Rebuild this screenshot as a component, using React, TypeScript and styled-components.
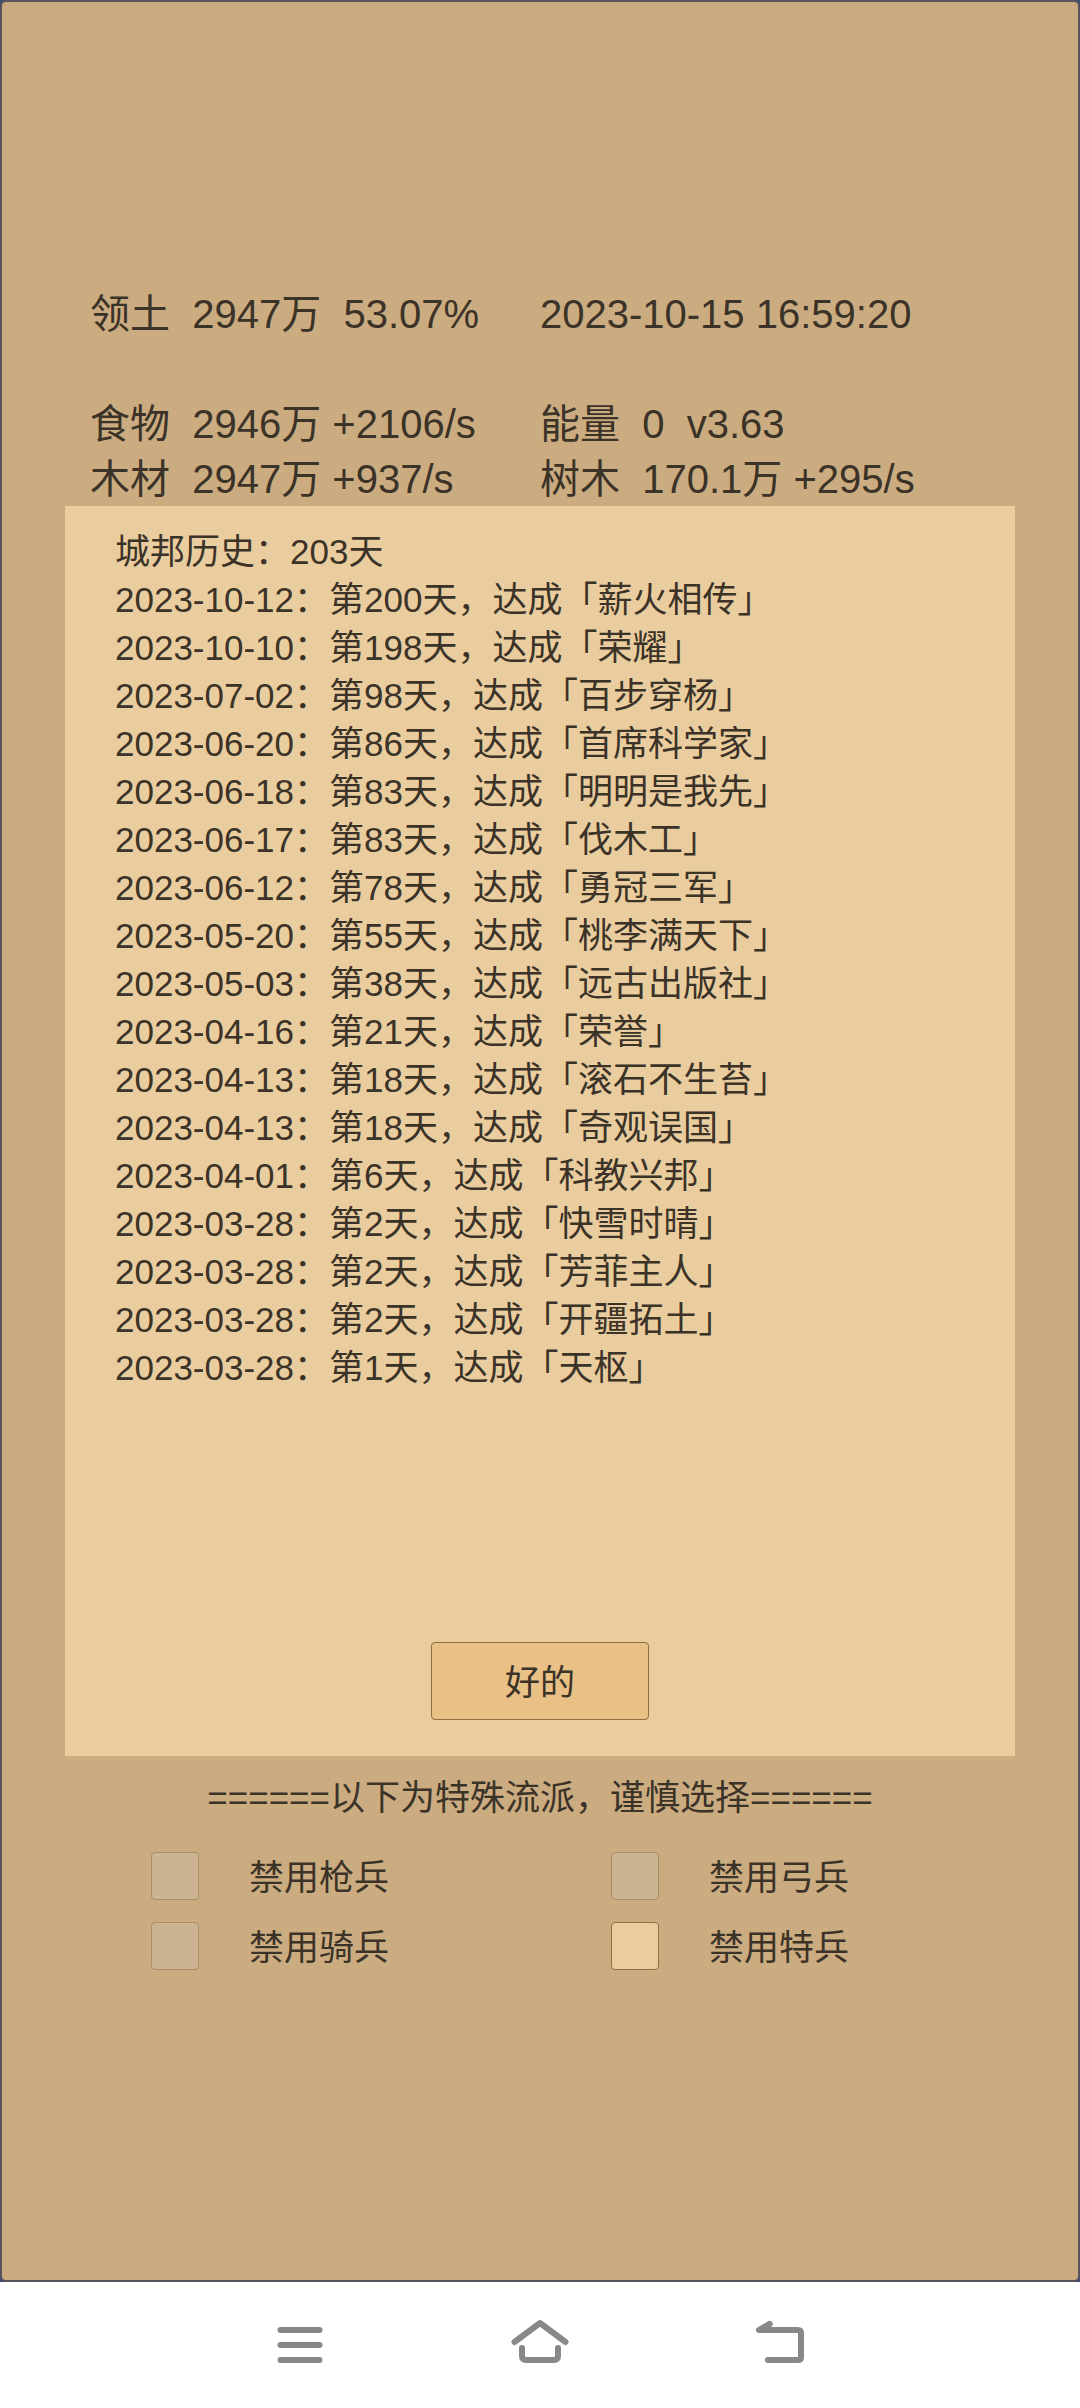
import React from "react";
import styled, { createGlobalStyle } from "styled-components";

const color = {
  ink: "#3b3228",
  ground: "#cbac80",
  panel: "#eacd9e",
  button: "#e9c085",
  line: "#8f6f42",
  frame: "#58535c",
  corner: "#3f4f6e",
  navIcon: "#888888",
};

const GlobalStyle = createGlobalStyle`
  *, *::before, *::after { box-sizing: border-box; }
  body {
    margin: 0;
    background: #ffffff;
    color: ${color.ink};
    font-family: "Liberation Sans", "Noto Sans CJK SC", sans-serif;
  }
`;

const Page = styled.div`
  display: flex;
  flex-direction: column;
  min-height: 100vh;
`;

const Backdrop = styled.div`
  display: flex;
  flex: 1;
  background: ${color.corner};
`;

const Screen = styled.main`
  display: flex;
  flex: 1;
  flex-direction: column;
  padding-top: 284px;
  background: ${color.ground};
  border: 2px solid ${color.frame};
  border-radius: 6px;
`;

const Stats = styled.section`
  display: grid;
  grid-template-columns: 1fr 1fr;
  grid-auto-rows: 55px;
  padding: 0 88px;
  font-size: 40px;
  line-height: 56px;
`;

const Stat = styled.div<{ $spaced?: boolean }>`
  white-space: pre;
  grid-row: span ${(p) => (p.$spaced ? 2 : 1)};
`;

const Panel = styled.section`
  display: flex;
  flex-direction: column;
  align-items: center;
  justify-content: space-between;
  min-height: 1250px;
  margin: 0 63px;
  padding: 22px 50px 36px;
  background: ${color.panel};
`;

const History = styled.div`
  align-self: stretch;
  font-size: 35px;
  line-height: 48px;
`;

const HistoryTitle = styled.h1`
  margin: 0;
  font: inherit;
`;

const HistoryList = styled.ul`
  margin: 0;
  padding: 0;
  list-style: none;
`;

const ConfirmButton = styled.button`
  width: 218px;
  height: 78px;
  padding: 4px 0 0;
  border: 1px solid ${color.line};
  border-radius: 4px;
  background: ${color.button};
  color: inherit;
  font-family: inherit;
  font-size: 35px;
  line-height: 48px;
`;

const SchoolTitle = styled.h2`
  margin: 18px 0 30px;
  font-size: 35px;
  font-weight: 400;
  line-height: 48px;
  text-align: center;
`;

const SchoolGrid = styled.div`
  display: grid;
  grid-template-columns: 1fr 1fr;
  row-gap: 18px;
  padding: 0 78px;
`;

const SchoolOption = styled.label`
  display: flex;
  align-items: flex-start;
  gap: 50px;
  padding-left: 71px;
  font-size: 35px;
  line-height: 52px;
`;

const Box = styled.input`
  appearance: none;
  flex: none;
  width: 48px;
  height: 48px;
  margin: 0;
  border: 1px solid ${color.line};
  border-radius: 4px;
  background: ${color.panel};

  &:disabled {
    border-color: #a98e69;
    background: #ccb391;
  }

  &:checked {
    background: ${color.button};
  }
`;

const NavBar = styled.nav`
  display: flex;
  justify-content: center;
  height: 126px;
  background: #ffffff;
`;

const NavButton = styled.button`
  display: flex;
  align-items: center;
  justify-content: center;
  width: 240px;
  padding: 0;
  border: 0;
  background: none;
`;

const Icon = styled.svg`
  width: 60px;
  height: 60px;
  fill: none;
  stroke: ${color.navIcon};
  stroke-width: 6px;
  stroke-linecap: round;
  stroke-linejoin: round;
`;

const stats = [
  { text: "领土  2947万  53.07%", spaced: true },
  { text: "2023-10-15 16:59:20", spaced: true },
  { text: "食物  2946万 +2106/s" },
  { text: "能量  0  v3.63" },
  { text: "木材  2947万 +937/s" },
  { text: "树木  170.1万 +295/s" },
];

const history: [string, number, string][] = [
  ["2023-10-12", 200, "薪火相传"],
  ["2023-10-10", 198, "荣耀"],
  ["2023-07-02", 98, "百步穿杨"],
  ["2023-06-20", 86, "首席科学家"],
  ["2023-06-18", 83, "明明是我先"],
  ["2023-06-17", 83, "伐木工"],
  ["2023-06-12", 78, "勇冠三军"],
  ["2023-05-20", 55, "桃李满天下"],
  ["2023-05-03", 38, "远古出版社"],
  ["2023-04-16", 21, "荣誉"],
  ["2023-04-13", 18, "滚石不生苔"],
  ["2023-04-13", 18, "奇观误国"],
  ["2023-04-01", 6, "科教兴邦"],
  ["2023-03-28", 2, "快雪时晴"],
  ["2023-03-28", 2, "芳菲主人"],
  ["2023-03-28", 2, "开疆拓土"],
  ["2023-03-28", 1, "天枢"],
];

const schools = [
  { id: "spear", label: "禁用枪兵", locked: true },
  { id: "bow", label: "禁用弓兵", locked: true },
  { id: "cavalry", label: "禁用骑兵", locked: true },
  { id: "special", label: "禁用特兵", locked: false },
];

export default function App() {
  return (
    <Page>
      <GlobalStyle />
      <Backdrop>
        <Screen>
          <Stats>
            {stats.map((s) => (
              <Stat key={s.text} $spaced={s.spaced}>
                {s.text}
              </Stat>
            ))}
          </Stats>

          <Panel>
            <History>
              <HistoryTitle>城邦历史：203天</HistoryTitle>
              <HistoryList>
                {history.map(([date, day, name]) => (
                  <li key={name}>{`${date}：第${day}天，达成「${name}」`}</li>
                ))}
              </HistoryList>
            </History>
            <ConfirmButton type="button">好的</ConfirmButton>
          </Panel>

          <SchoolTitle>======以下为特殊流派，谨慎选择======</SchoolTitle>
          <SchoolGrid>
            {schools.map((s) => (
              <SchoolOption key={s.id} htmlFor={s.id}>
                <Box type="checkbox" id={s.id} disabled={s.locked} />
                <span>{s.label}</span>
              </SchoolOption>
            ))}
          </SchoolGrid>
        </Screen>
      </Backdrop>

      <NavBar>
        <NavButton type="button" aria-label="菜单">
          <Icon viewBox="0 0 60 60">
            <path d="M10.5 15H49.5M10.5 30H49.5M10.5 45H49.5" />
          </Icon>
        </NavButton>
        <NavButton type="button" aria-label="主页">
          <Icon viewBox="0 0 60 60">
            <path d="M4.5 27L30 8L55.5 27" />
            <path d="M12 33V41Q12 45 16 45H44Q48 45 48 41V33" />
          </Icon>
        </NavButton>
        <NavButton type="button" aria-label="返回">
          <Icon viewBox="0 0 60 60">
            <path d="M19.5 9L9 15H48Q51 15 51 18V42Q51 45 48 45H18" />
            <path d="M19.5 9L17 14" />
          </Icon>
        </NavButton>
      </NavBar>
    </Page>
  );
}
